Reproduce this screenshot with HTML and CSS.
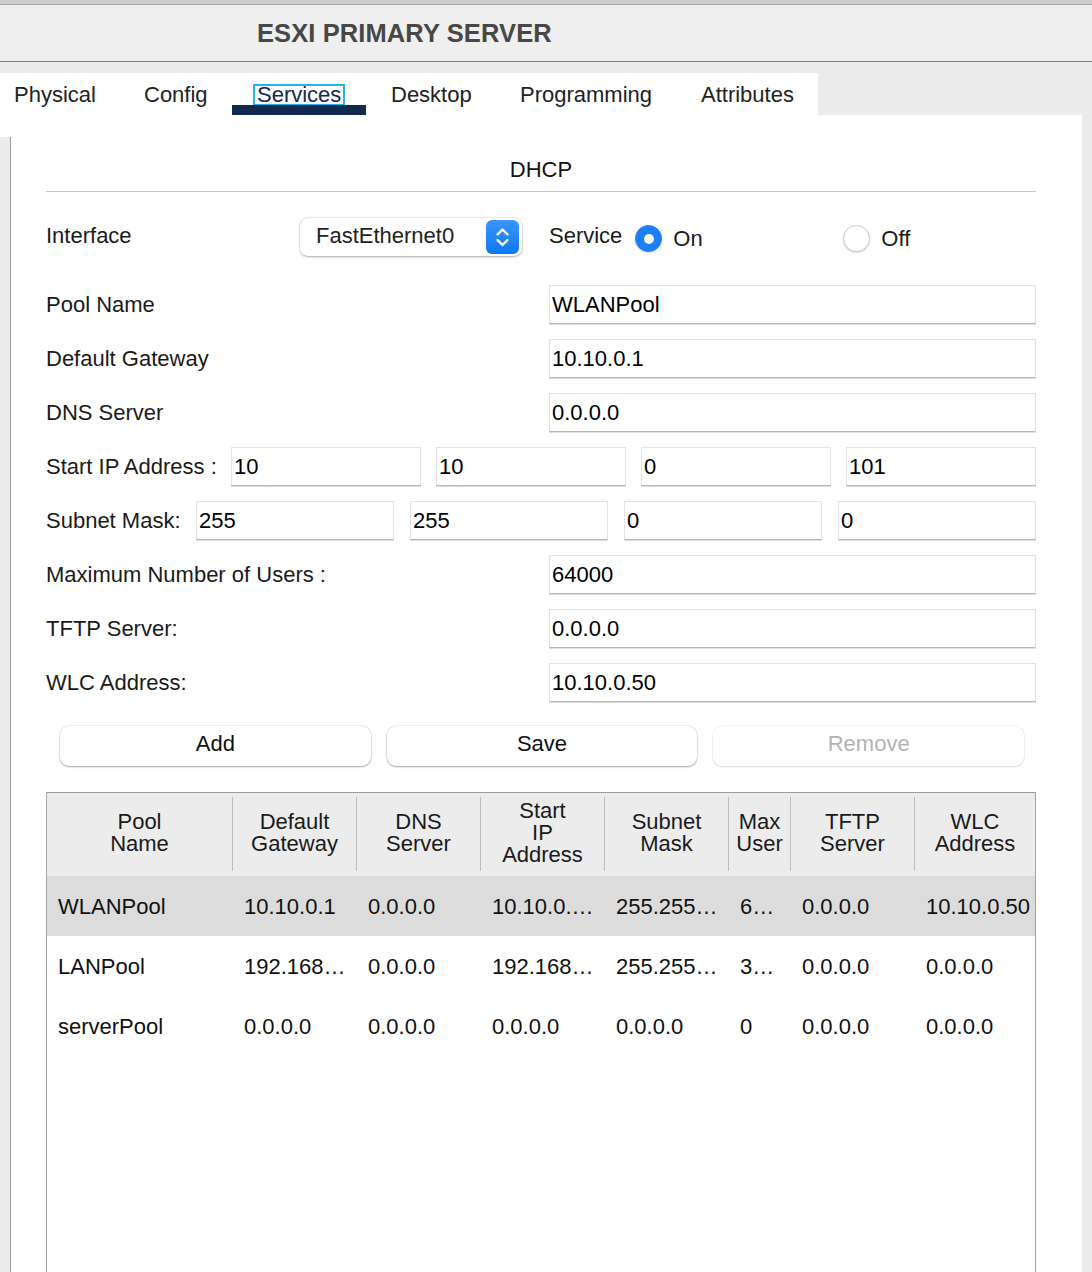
FILE: index.html
```html
<!DOCTYPE html>
<html lang="en">
<head>
<meta charset="utf-8">
<title>ESXI PRIMARY SERVER</title>
<link rel="stylesheet" href="styles.css">
</head>
<body>
<div class="window">
  <div class="topline"></div>
  <header class="titlebar"><h1 class="title">ESXI PRIMARY SERVER</h1></header>
  <nav class="tabbar">
    <div class="tabs">
      <div class="tab t-physical">Physical</div>
      <div class="tab t-config">Config</div>
      <div class="tab t-services active"><span class="focus">Services</span></div>
      <div class="tab t-desktop">Desktop</div>
      <div class="tab t-programming">Programming</div>
      <div class="tab t-attributes">Attributes</div>
    </div>
  </nav>
  <div class="content">
    <div class="left-rail"><div class="rail-gray"></div></div>
    <main class="panel">
      <div class="section-title">DHCP</div>

      <div class="iface-row">
        <div class="iface-label">Interface</div>
        <div class="select">
          <span class="select-text">FastEthernet0</span>
          <span class="stepper">
            <svg width="33" height="34" viewBox="0 0 33 34">
              <path d="M11.5 14.5 L16.5 9.5 L21.5 14.5" fill="none" stroke="#fff" stroke-width="2.4" stroke-linecap="round" stroke-linejoin="round"/>
              <path d="M11.5 20 L16.5 25 L21.5 20" fill="none" stroke="#fff" stroke-width="2.4" stroke-linecap="round" stroke-linejoin="round"/>
            </svg>
          </span>
        </div>
        <div class="service-label">Service</div>
        <div class="radio-opt opt-on"><span class="radio on"></span><span>On</span></div>
        <div class="radio-opt"><span class="radio"></span><span>Off</span></div>
      </div>

      <div class="fields">
        <div class="field-row"><div class="field-label">Pool Name</div><div class="input wide">WLANPool</div></div>
        <div class="field-row"><div class="field-label">Default Gateway</div><div class="input wide">10.10.0.1</div></div>
        <div class="field-row"><div class="field-label">DNS Server</div><div class="input wide">0.0.0.0</div></div>
        <div class="field-row quad start-ip">
          <div class="field-label">Start IP Address :</div>
          <div class="input">10</div><div class="input">10</div><div class="input">0</div><div class="input">101</div>
        </div>
        <div class="field-row quad mask">
          <div class="field-label">Subnet Mask:</div>
          <div class="input">255</div><div class="input">255</div><div class="input">0</div><div class="input">0</div>
        </div>
        <div class="field-row"><div class="field-label">Maximum Number of Users :</div><div class="input wide">64000</div></div>
        <div class="field-row"><div class="field-label">TFTP Server:</div><div class="input wide">0.0.0.0</div></div>
        <div class="field-row"><div class="field-label">WLC Address:</div><div class="input wide">10.10.0.50</div></div>
      </div>

      <div class="buttons">
        <div class="btn">Add</div>
        <div class="btn">Save</div>
        <div class="btn disabled">Remove</div>
      </div>

      <div class="table">
        <div class="thead">
          <div class="th"><div class="th-in">Pool<br>Name</div></div>
          <div class="th"><div class="th-in">Default<br>Gateway</div></div>
          <div class="th"><div class="th-in">DNS<br>Server</div></div>
          <div class="th"><div class="th-in">Start<br>IP<br>Address</div></div>
          <div class="th"><div class="th-in">Subnet<br>Mask</div></div>
          <div class="th"><div class="th-in">Max<br>User</div></div>
          <div class="th"><div class="th-in">TFTP<br>Server</div></div>
          <div class="th last"><div class="th-in">WLC<br>Address</div></div>
        </div>
        <div class="tr selected">
          <div class="td">WLANPool</div><div class="td">10.10.0.1</div><div class="td">0.0.0.0</div><div class="td">10.10.0.…</div><div class="td">255.255…</div><div class="td">6…</div><div class="td">0.0.0.0</div><div class="td">10.10.0.50</div>
        </div>
        <div class="tr">
          <div class="td">LANPool</div><div class="td">192.168…</div><div class="td">0.0.0.0</div><div class="td">192.168…</div><div class="td">255.255…</div><div class="td">3…</div><div class="td">0.0.0.0</div><div class="td">0.0.0.0</div>
        </div>
        <div class="tr">
          <div class="td">serverPool</div><div class="td">0.0.0.0</div><div class="td">0.0.0.0</div><div class="td">0.0.0.0</div><div class="td">0.0.0.0</div><div class="td">0</div><div class="td">0.0.0.0</div><div class="td">0.0.0.0</div>
        </div>
      </div>
    </main>
    <div class="right-rail"></div>
  </div>
</div>
</body>
</html>
```

FILE: styles.css
```css
* { box-sizing: border-box; }
html, body { margin: 0; padding: 0; height: 100%; overflow: hidden; }
body {
  font-family: "Liberation Sans", Arial, sans-serif;
  font-size: 22px;
  color: #1a1a1a;
  background: #ececec;
}
.window { display: flex; flex-direction: column; height: 100vh; }

.topline { height: 5px; background: #cdcdcd; border-bottom: 1px solid #a9a9a9; }
.titlebar {
  height: 57px;
  background: #efefef;
  border-bottom: 1px solid #808080;
}
.title {
  margin: 0;
  padding-left: 257px;
  line-height: 56px;
  font-size: 25.5px;
  font-weight: bold;
  color: #474747;
  letter-spacing: 0.1px;
}

.tabbar { background: #ececec; padding-top: 11px; }
.tabs { display: flex; width: 818px; height: 42px; background: #fff; }
.tab {
  position: relative;
  height: 42px;
  line-height: 43px;
  padding-left: 25px;
  color: #222;
  white-space: nowrap;
}
.t-physical { width: 119px; padding-left: 14px; }
.t-config { width: 113px; }
.t-services { width: 134px; }
.t-desktop { width: 129px; }
.t-programming { width: 181px; }
.t-attributes { width: 142px; }
.tab.active { color: #13294b; }
.tab.active::after {
  content: "";
  position: absolute;
  left: 0; right: 0; bottom: 0;
  height: 10px;
  background: #0f2a4e;
}
.focus {
  outline: 2px solid #22b4ea;
  outline-offset: 0px;
  padding: 0 2px;
  margin-left: -2px;
  line-height: 18px;
  display: inline-block;
}

.content { flex: 1; display: flex; min-height: 0; }
.left-rail { width: 11px; display: flex; flex-direction: column; background: #fff; padding-top: 22px; }
.rail-gray { flex: 1; background: #ececec; border-right: 1px solid #9a9a9a; }
.right-rail { width: 10px; background: #ebebeb; }
.panel { flex: 1; background: #fff; padding: 0 46px 0 35px; overflow: hidden; }

.section-title {
  text-align: center;
  padding-top: 42px;
  padding-bottom: 8px;
  line-height: 26px;
  border-bottom: 1px solid #c2c2c2;
  color: #111;
}

.iface-row { display: flex; align-items: center; margin-top: 26px; height: 38px; }
.iface-label { width: 254px; margin-top: -2px; }
.select {
  width: 222px;
  height: 38px;
  border-radius: 8px;
  background: #fff;
  box-shadow: 0 0 0 0.5px rgba(0,0,0,0.12), 0 1px 2.5px rgba(0,0,0,0.28);
  display: flex;
  align-items: center;
  justify-content: space-between;
  padding: 0 3px 0 16px;
}
.select-text { color: #222; margin-top: -2px; }
.stepper {
  width: 33px;
  height: 34px;
  border-radius: 6px;
  background: linear-gradient(#3a96fd, #0d77f6);
  display: flex;
}
.service-label { margin-left: 27px; margin-right: 13px; margin-top: -2px; }
.radio-opt { display: flex; align-items: center; gap: 11px; margin-top: 3px; }
.opt-on { width: 208px; }
.radio {
  width: 27px; height: 27px;
  border-radius: 50%;
  background: #fff;
  border: 1px solid #c9c9c9;
  box-shadow: 0 1px 1.5px rgba(0,0,0,0.15);
  position: relative;
}
.radio.on { background: #1b80f6; border-color: #1b80f6; }
.radio.on::after {
  content: "";
  position: absolute;
  left: 50%; top: 50%;
  width: 10px; height: 10px;
  margin: -5px 0 0 -5px;
  border-radius: 50%;
  background: #fff;
}

.fields { margin-top: 29px; display: flex; flex-direction: column; gap: 15px; }
.field-row { display: flex; align-items: center; height: 39px; }
.field-label { width: 503px; white-space: nowrap; }
.input {
  height: 39px;
  border: 1px solid #e3e3e3;
  border-bottom-color: #b4b4b4;
  box-shadow: 0 1px 0.5px rgba(0,0,0,0.12);
  padding-left: 2px;
  line-height: 37px;
  color: #000;
  background: #fff;
}
.input.wide { flex: 1; }
.quad { gap: 15px; }
.quad .input { flex: 1; }
.start-ip .field-label { width: 170px; }
.mask { gap: 16px; }
.mask .field-label { width: 134px; }

.buttons { display: flex; gap: 16px; padding: 0 12px 0 14px; margin-top: 24px; }
.btn {
  flex: 1;
  height: 40px;
  line-height: 35px;
  text-align: center;
  border-radius: 9px;
  background: #fff;
  box-shadow: 0 0 0 0.5px rgba(0,0,0,0.12), 0 1px 2px rgba(0,0,0,0.3);
  color: #111;
}
.btn.disabled { color: #b3b3b3; box-shadow: 0 0 0 0.5px rgba(0,0,0,0.08), 0 1px 2px rgba(0,0,0,0.1); }

.table {
  margin-top: 26px;
  height: 560px;
  border: 1px solid #a5a5a5;
  border-top-color: #9a9a9a;
  border-bottom: none;
}
.thead, .tr {
  display: grid;
  grid-template-columns: 186px 124px 124px 124px 124px 62px 124px 1fr;
}
.thead { background: #ececec; height: 83px; }
.th { padding: 4px 0 5px; }
.th-in {
  height: 100%;
  border-right: 1px solid #bdbdbd;
  display: flex;
  align-items: center;
  justify-content: center;
  text-align: center;
  line-height: 22px;
  padding-bottom: 2px;
  color: #1a1a1a;
}
.th.last .th-in { border-right: none; }
.tr { height: 60px; }
.tr.selected { background: #dcdcdc; }
.td {
  display: flex;
  align-items: center;
  padding-left: 11px;
  padding-top: 1px;
  white-space: nowrap;
  overflow: hidden;
  color: #111;
}
```
